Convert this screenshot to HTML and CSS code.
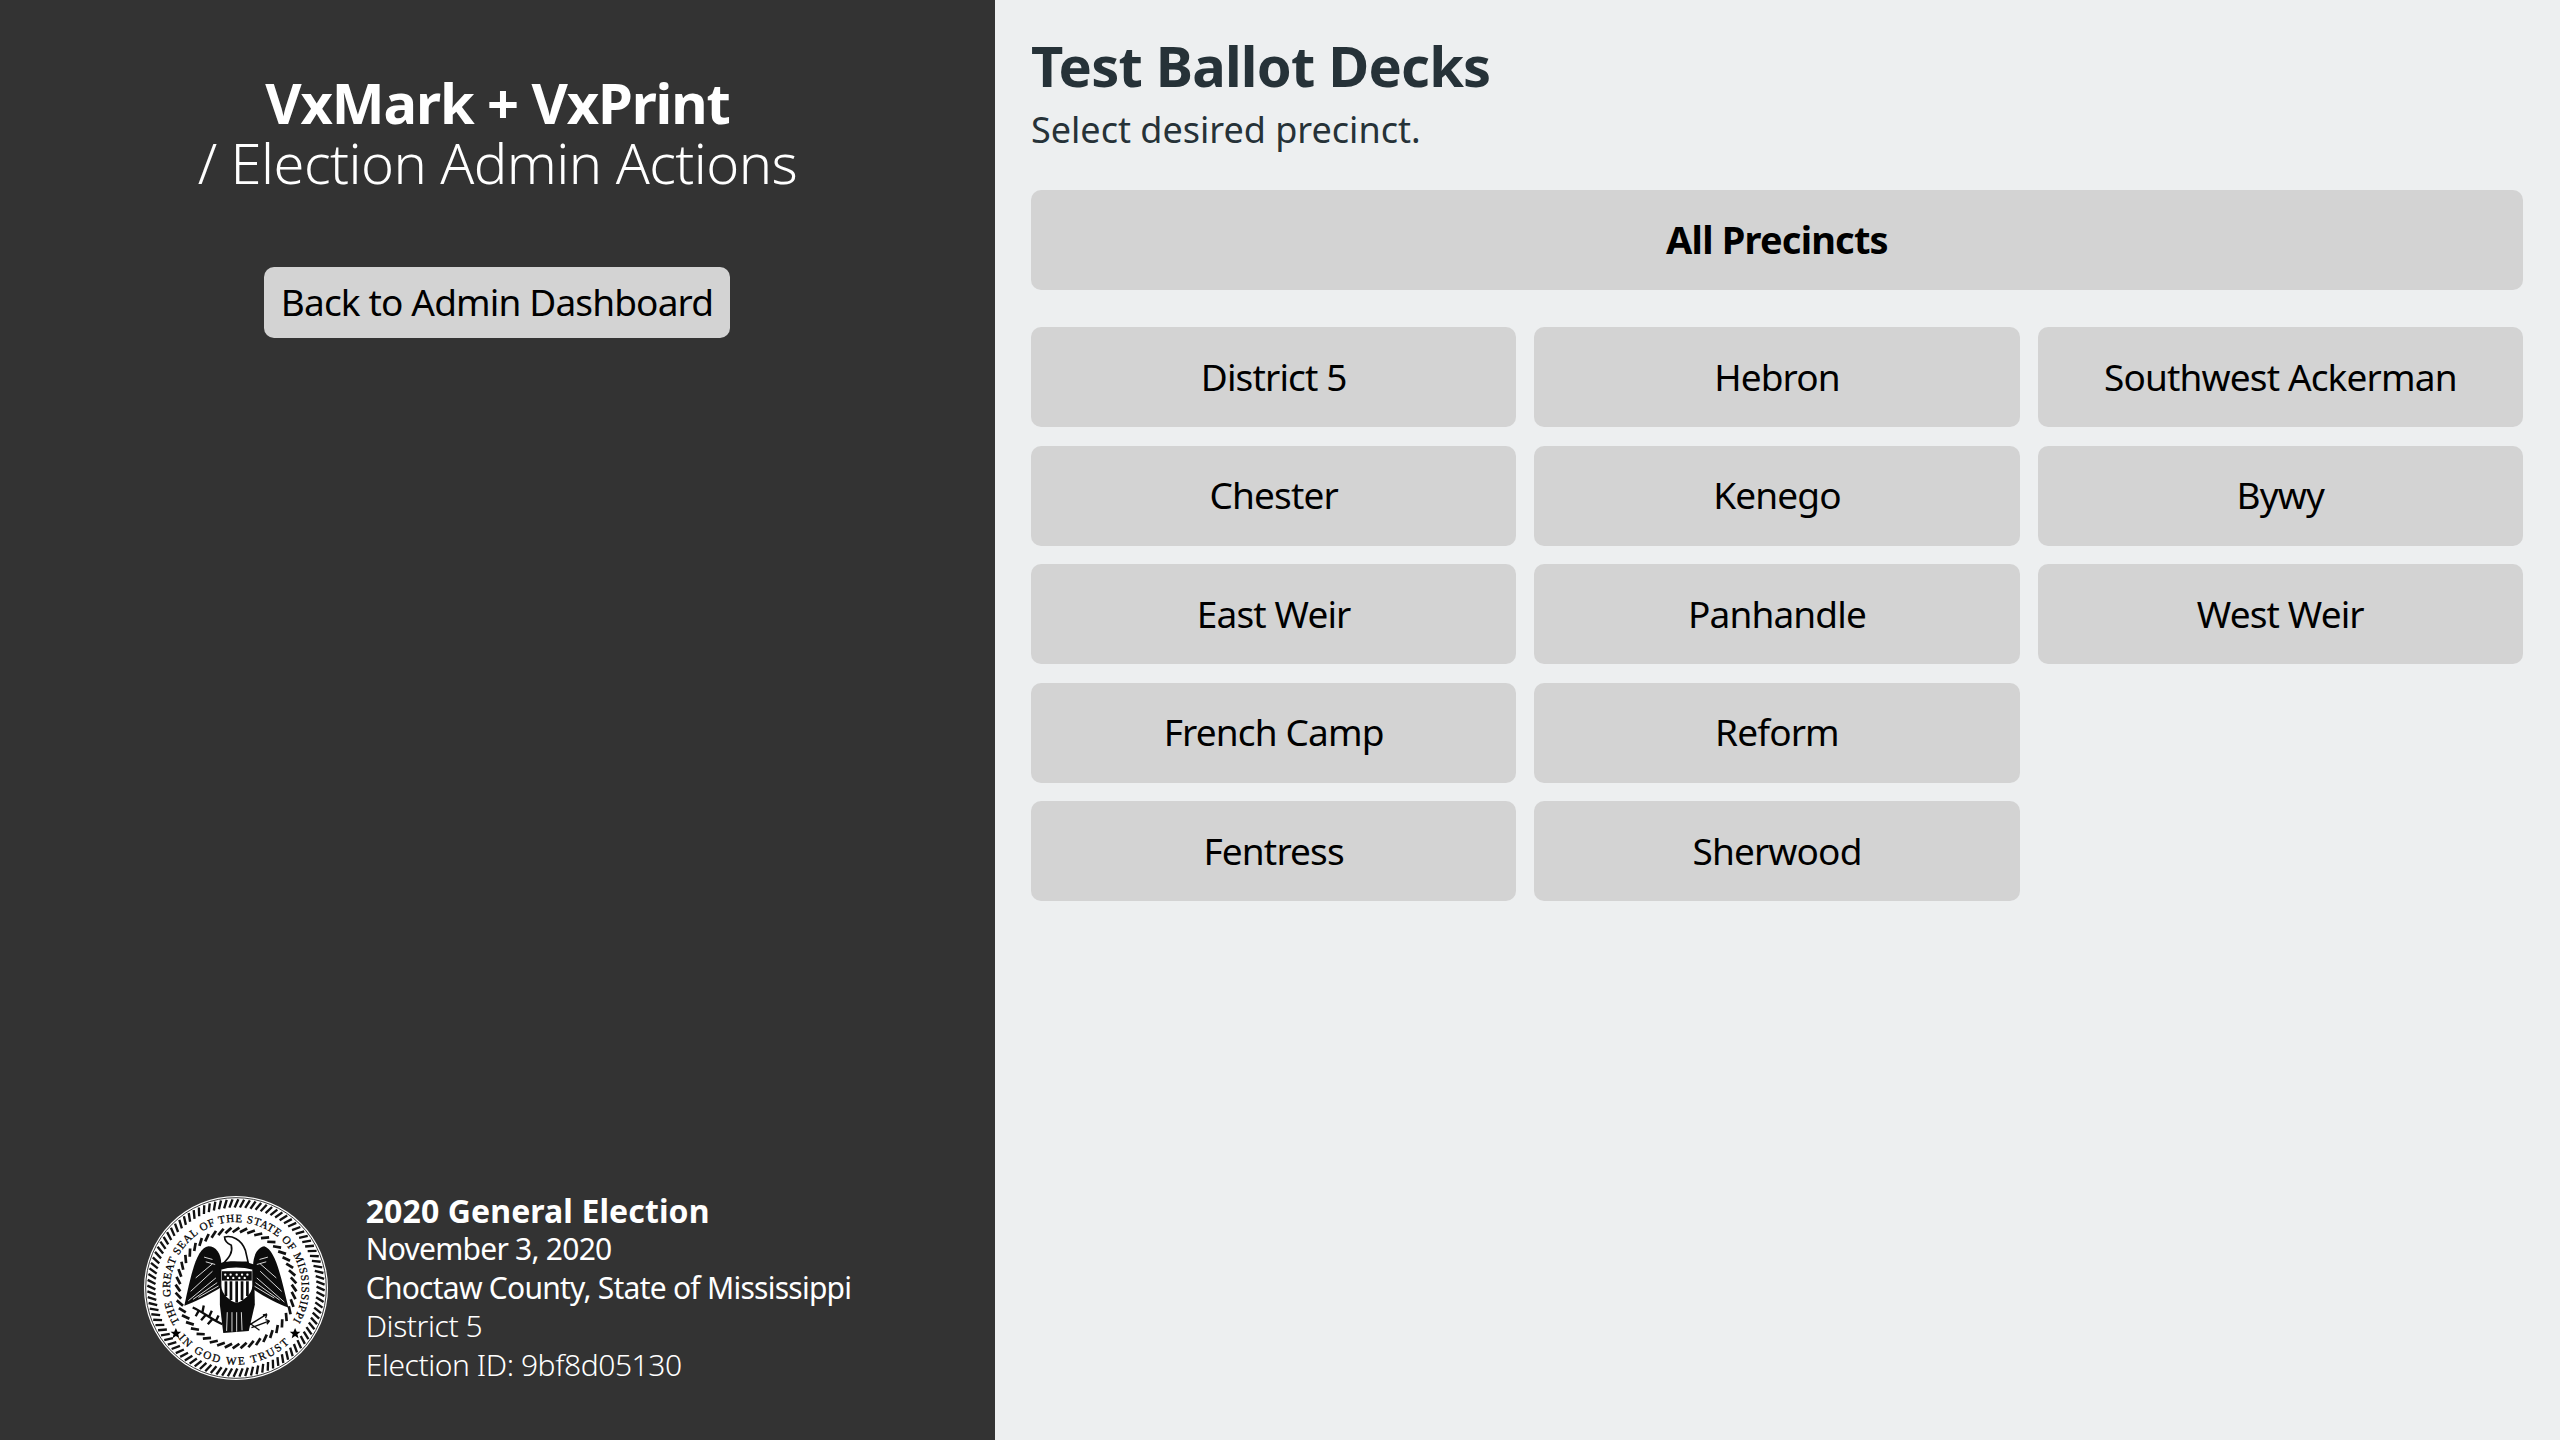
FILE: index.html
```html
<!DOCTYPE html>
<html lang="en">
<head>
    <meta charset="UTF-8">
    <meta name="viewport" content="width=device-width, initial-scale=1.0">
    <title>Test Ballot Decks</title>
    <link rel="stylesheet" href="styles.css">
</head>
<body>
    <aside class="sidebar">
        <div class="sidebar-top">
            <h1 class="app-title">
                <span class="app-name">VxMark + VxPrint</span>
                <span class="app-section">/ Election Admin Actions</span>
            </h1>
            <button class="btn btn-back">Back to Admin Dashboard</button>
        </div>
        <div class="election-info">
            <svg class="seal" viewBox="-274 -274 548 548">
                <defs>
                    <!-- rope strands, doubled up by rotation -->
                    <path id="strand" d="M-4,-240 L7,-264" class="strand"></path>
                    <g id="s3"><use href="#strand"/><use href="#strand" transform="rotate(3.75)"/><use href="#strand" transform="rotate(7.5)"/></g>
                    <g id="s6"><use href="#s3"/><use href="#s3" transform="rotate(11.25)"/></g>
                    <g id="s12"><use href="#s6"/><use href="#s6" transform="rotate(22.5)"/></g>
                    <g id="s24"><use href="#s12"/><use href="#s12" transform="rotate(45)"/></g>
                    <g id="s48"><use href="#s24"/><use href="#s24" transform="rotate(90)"/></g>
                    <path id="istrand" d="M-10,-166 L10,-180" class="strand strand-inner"></path>
                    <g id="i2"><use href="#istrand"/><use href="#istrand" transform="rotate(7.5)"/></g>
                    <g id="i4"><use href="#i2"/><use href="#i2" transform="rotate(15)"/></g>
                    <g id="i8"><use href="#i4"/><use href="#i4" transform="rotate(30)"/></g>
                    <g id="i16"><use href="#i8"/><use href="#i8" transform="rotate(60)"/></g>
                    <path id="top-arc" d="M-167,102 A196 196 0 1 1 167,102"></path>
                    <path id="bottom-arc" d="M-172,150 A228 228 0 0 0 172,150"></path>
                    <polygon id="star" points="0,-16 5,-5 16,-5 7,3 10,15 0,8 -10,15 -7,3 -16,-5 -5,-5"></polygon>
                </defs>
                <circle r="274" class="seal-bg"></circle>
                <circle r="269" class="seal-line"></circle>
                <g>
                    <use href="#s48"/><use href="#s48" transform="rotate(180)"/>
                </g>
                <g>
                    <use href="#i16"/><use href="#i16" transform="rotate(120)"/><use href="#i16" transform="rotate(240)"/>
                </g>
                <text class="seal-text"><textPath href="#top-arc" textLength="826">THE GREAT SEAL OF THE STATE OF MISSISSIPPI</textPath></text>
                <text class="seal-text"><textPath href="#bottom-arc" textLength="370">IN GOD WE TRUST</textPath></text>
                <use href="#star" x="-179" y="135"/>
                <use href="#star" x="176" y="135"/>

                <!-- wings -->
                <path class="ink" d="M-82,-124 C-115,-118 -130,-60 -154,53 C-124,43 -84,22 -44,-2 L-44,-72 C-44,-102 -60,-124 -82,-124Z"></path>
                <path class="ink" d="M84,-124 C60,-120 50,-88 51,-62 L44,-2 C76,22 126,48 156,58 C136,-22 120,-112 84,-124Z"></path>
                <path class="feather" d="M-142,38 L-60,-30 M-128,34 L-56,-16 M-112,28 L-52,-6 M-135,10 L-70,-50 M-120,-30 L-70,-72 M-95,-92 L-70,-85 M-90,-78 L-62,-70"></path>
                <path class="feather" d="M144,42 L62,-30 M130,36 L58,-16 M114,30 L54,-6 M136,10 L72,-50 M120,-30 L72,-72 M95,-92 L70,-85 M90,-78 L62,-70"></path>
                <!-- head -->
                <path class="head" d="M-34,-152 C-14,-157 16,-147 28,-112 L36,-77 L-39,-72 C-19,-92 -9,-107 -14,-127 C-24,-132 -34,-142 -34,-152Z"></path>
                <!-- body and tail -->
                <path class="ink" d="M-48,-74 C-20,-82 20,-82 54,-70 L56,50 L38,128 L-38,134 L-48,50Z"></path>
                <path class="feather" d="M-26,72 L-28,128 M-12,72 L-12,130 M2,72 L2,130 M16,72 L18,126"></path>
                <!-- shield -->
                <path class="shield" d="M-46,-57 C-20,-66 20,-66 51,-57 L51,-7 C51,23 16,43 2,48 C-14,43 -46,23 -46,-7Z"></path>
                <rect class="ink" x="-42" y="-50" width="89" height="28"></rect>
                <path class="stripes" d="M-30,-20 L-30,24 M-15,-20 L-15,36 M2,-20 L2,44 M18,-20 L18,36 M34,-20 L34,24"></path>
                <path class="stars" d="M-32,-40 L-32,-40 M-16,-40 L-16,-40 M2,-40 L2,-40 M18,-40 L18,-40 M34,-40 L34,-40 M-24,-30 L-24,-30 M-8,-30 L-8,-30 M10,-30 L10,-30 M26,-30 L26,-30"></path>
                <!-- olive branch and arrows -->
                <path class="branch" d="M-129,58 C-100,70 -70,95 -40,108 M-110,66 L-120,84 M-100,72 L-96,52 M-90,80 L-104,96 M-80,85 L-72,68 M-70,92 L-84,108 M-60,98 L-52,82"></path>
                <path class="arrows" d="M40,110 L92,78 M46,118 L100,98 M40,104 L70,126 M92,78 L80,80 M92,78 L88,90 M100,98 L88,94 M100,98 L92,108"></path>
            </svg>
            <div class="election-text">
                <div class="election-name">2020 General Election</div>
                <div>November 3, 2020</div>
                <div>Choctaw County, State of Mississippi</div>
                <div class="election-light">District 5</div>
                <div class="election-light">Election ID: 9bf8d05130</div>
            </div>
        </div>
    </aside>
    <main class="content">
        <h2 class="page-title">Test Ballot Decks</h2>
        <p class="page-hint">Select desired precinct.</p>
        <button class="btn btn-all">All Precincts</button>
        <div class="precinct-grid">
            <button class="btn">District 5</button>
            <button class="btn">Chester</button>
            <button class="btn">East Weir</button>
            <button class="btn">French Camp</button>
            <button class="btn">Fentress</button>
            <button class="btn">Hebron</button>
            <button class="btn">Kenego</button>
            <button class="btn">Panhandle</button>
            <button class="btn">Reform</button>
            <button class="btn">Sherwood</button>
            <button class="btn">Southwest Ackerman</button>
            <button class="btn">Bywy</button>
            <button class="btn">West Weir</button>
        </div>
    </main>
</body>
</html>
```

FILE: styles.css
```css
body {
    margin: 0;
    height: 1440px;
    display: flex;
    font-family: "Noto Sans", sans-serif;
    background-color: #edeff0;
    overflow: hidden;
}

.sidebar {
    width: 995px;
    flex-shrink: 0;
    box-sizing: border-box;
    padding: 72px 0 56px;
    background-color: #333333;
    color: white;
    display: flex;
    flex-direction: column;
    justify-content: space-between;
    align-items: center;
}
.sidebar-top {
    display: flex;
    flex-direction: column;
    align-items: center;
}
.app-title {
    margin: 0 0 75px;
    text-align: center;
    font-size: 56px;
    line-height: 60px;
    font-weight: 400;
}
.app-name {
    display: block;
    font-weight: 700;
    letter-spacing: -1.1px;
}
.app-section {
    display: block;
    font-weight: 300;
    letter-spacing: -0.55px;
}

.btn {
    border: none;
    border-radius: 10px;
    background-color: #d3d3d3;
    color: black;
    font-family: inherit;
    font-size: 37px;
    letter-spacing: -0.85px;
    height: 100px;
    padding: 0 0 2px;
    white-space: nowrap;
    cursor: pointer;
}
.btn-back {
    width: 466px;
    height: 71px;
    margin-right: 1px;
}
.btn-all {
    display: block;
    width: 100%;
    font-size: 38px;
    font-weight: 700;
    letter-spacing: -0.8px;
    margin-bottom: 37px;
}

.election-info {
    display: flex;
    align-items: center;
    gap: 38px;
}
.seal {
    width: 184px;
    height: 184px;
}
.seal-bg { fill: white; }
.seal-line { fill: none; stroke: #111111; stroke-width: 2.5; }
.strand { fill: none; stroke: #111111; stroke-width: 7; }
.strand-inner { stroke-width: 8; }
.seal-text {
    font-family: "Liberation Serif", serif;
    font-size: 33px;
    fill: #000000;
    stroke: #000000;
    stroke-width: 0.8;
}
.seal use { fill: #000000; }
.ink { fill: #0c0c0c; }
.feather { fill: none; stroke: white; stroke-width: 2.5; }
.head { fill: white; stroke: #0c0c0c; stroke-width: 5; }
.shield { fill: white; stroke: #0c0c0c; stroke-width: 5; }
.stripes { fill: none; stroke: #0c0c0c; stroke-width: 8; }
.stars { fill: none; stroke: white; stroke-width: 7; stroke-linecap: round; }
.branch { fill: none; stroke: #0c0c0c; stroke-width: 7; }
.arrows { fill: none; stroke: #0c0c0c; stroke-width: 4; }

.election-text {
    font-size: 30px;
    line-height: 38.4px;
    letter-spacing: -0.75px;
}
.election-name {
    font-size: 32px;
    font-weight: 700;
    letter-spacing: 0.1px;
}
.election-light {
    font-weight: 300;
    letter-spacing: -0.43px;
}

.content {
    flex: 1;
    box-sizing: border-box;
    padding: 30px 37px 0 36px;
}
.page-title {
    margin: 0;
    font-size: 56px;
    line-height: 70px;
    font-weight: 700;
    letter-spacing: -0.8px;
    color: #263238;
}
.page-hint {
    margin: 5px 0 35px;
    font-size: 36px;
    line-height: 50px;
    color: #263238;
}
.precinct-grid {
    display: grid;
    grid-template-columns: repeat(3, 1fr);
    grid-template-rows: repeat(5, 100px);
    grid-auto-flow: column;
    gap: 18.5px 18px;
}
```
